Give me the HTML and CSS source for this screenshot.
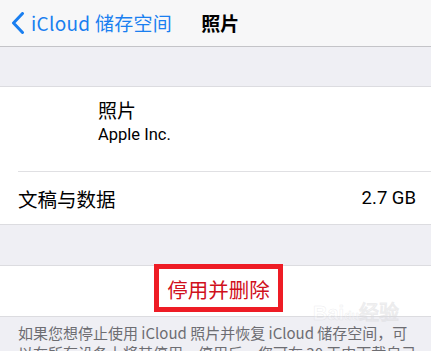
FILE: index.html
```html
<!DOCTYPE html>
<html lang="zh-CN">
<head>
<meta charset="utf-8">
<link rel="stylesheet" href="styles.css">
</head>
<body>
<div class="page">
  <header class="nav">
    <div class="back">
      <svg class="chev" width="14" height="22" viewBox="0 0 14 22"><path d="M11.5 1.5 L2.5 11 L11.5 20.5" fill="none" stroke="#1a7ff0" stroke-width="3" stroke-linecap="round" stroke-linejoin="round"/></svg>
      <span class="back-text">iCloud 储存空间</span>
    </div>
    <div class="title">照片</div>
  </header>
  <div class="spacer top-spacer"></div>
  <section class="group">
    <div class="app-row">
      <div class="app-name">照片</div>
      <div class="app-vendor">Apple Inc.</div>
    </div>
    <div class="data-row">
      <span class="label">文稿与数据</span>
      <span class="value">2.7 GB</span>
    </div>
  </section>
  <div class="spacer mid-spacer"></div>
  <section class="action-row">
    <span class="action">停用并删除</span>
  </section>
  <p class="footer">如果您想停止使用 iCloud 照片并恢复 iCloud 储存空间，可以在所有设备上将其停用。停用后，您可在 30 天内下载自己的照片和视频。</p>
  <div class="watermark">Bai<span class="du">du</span>经验</div>
</div>
</body>
</html>
```
FILE: styles.css
```css
html, body {
  margin: 0;
  padding: 0;
}
body {
  background: #efeff4;
  font-family: "Noto Sans CJK SC", "Noto Sans", sans-serif;
  width: 431px;
  height: 351px;
  overflow: hidden;
}
.page {
  position: relative;
}
.nav {
  height: 46px;
  background: #f7f7f8;
  border-bottom: 1px solid #c4c4c8;
  display: flex;
  align-items: center;
}
.back {
  display: flex;
  align-items: center;
  margin-left: 11px;
  color: #1a7ff0;
}
.chev {
  display: block;
}
.back-text {
  margin-left: 6px;
  font-size: 19px;
  line-height: 22px;
  letter-spacing: 0.3px;
}
.title {
  margin-left: 29px;
  font-size: 19px;
  font-weight: 700;
  color: #000;
  line-height: 22px;
}
.spacer {
  background: #efeff4;
}
.top-spacer {
  height: 39px;
  border-bottom: 1px solid #dcdce0;
}
.group {
  background: #fff;
  border-bottom: 1px solid #dcdce0;
}
.app-row {
  height: 85px;
  padding-left: 98px;
  padding-top: 10px;
  box-sizing: border-box;
  background: linear-gradient(#e0e0e3, #e0e0e3) no-repeat 18px 100% / 100% 1px;
}
.app-name {
  font-size: 19px;
  line-height: 26px;
  color: #000;
}
.app-vendor {
  font-family: "Roboto", "Noto Sans", sans-serif;
  font-size: 16.5px;
  line-height: 20px;
  color: #000;
  margin-top: 2px;
}
.data-row {
  height: 52px;
  display: flex;
  align-items: center;
  justify-content: space-between;
  padding: 0 15px 0 18px;
}
.label {
  font-size: 19.5px;
  color: #000;
}
.value {
  font-family: "Roboto", "Noto Sans", sans-serif;
  font-size: 18.5px;
  color: #000;
}
.mid-spacer {
  height: 40px;
  border-bottom: 1px solid #dcdce0;
}
.action-row {
  height: 50px;
  background: #fff;
  border-bottom: 1px solid #dcdce0;
  display: flex;
  justify-content: center;
  align-items: flex-start;
}
.action {
  margin-top: -2px;
  margin-left: 6px;
  width: 129px;
  height: 48px;
  box-sizing: border-box;
  border: 5px solid #ee1c25;
  color: #d0101c;
  font-size: 20.5px;
  display: flex;
  align-items: center;
  justify-content: center;
  padding-top: 1px;
}
.footer {
  margin: 6px 0 0 0;
  padding: 0 14px 0 18px;
  font-size: 15px;
  line-height: 20px;
  color: #6d6d72;
}
.watermark {
  position: absolute;
  left: 313px;
  top: 297px;
  font-family: "Liberation Sans", sans-serif;
  font-weight: 700;
  font-size: 20px;
  color: rgba(255, 255, 255, 0.3);
  -webkit-text-stroke: 0.5px rgba(200, 200, 205, 0.35);
}
.watermark .du {
  font-size: 12px;
}
```
